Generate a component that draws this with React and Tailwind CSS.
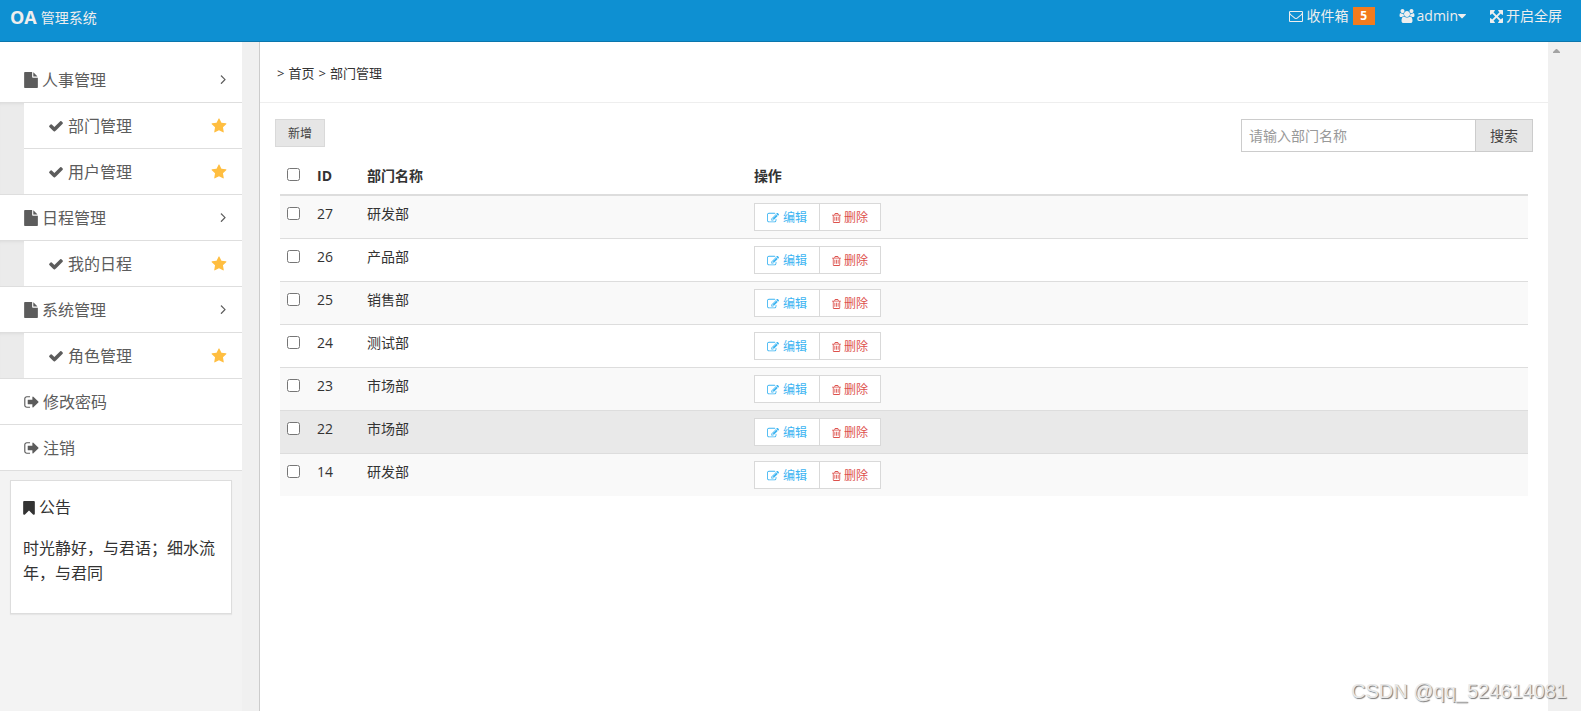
import React, { useState } from 'react';

const PATHS = {
  file: 'M1152 512v-472q22 14 36 28l408 408q14 14 28 36h-472zm-128 32q0 40 28 68t68 28h544v1056q0 40-28 68t-68 28h-1344q-40 0-68-28t-28-68v-1600q0-40 28-68t68-28h800v544z',
  check: 'M1671 566q0 40-28 68l-724 724-136 136q-28 28-68 28t-68-28l-136-136-362-362q-28-28-28-68t28-68l136-136q28-28 68-28t68 28l294 295 656-657q28-28 68-28t68 28l136 136q28 28 28 68z',
  star: 'M1728 647q0 22-26 48l-363 354 86 500q1 7 1 20 0 21-10.5 35.5t-30.5 14.5q-19 0-40-12l-449-236-449 236q-22 12-40 12-21 0-31.5-14.5t-10.5-35.5q0-6 2-20l86-500-364-354q-25-27-25-48 0-37 56-46l502-73 225-455q19-41 49-41t49 41l225 455 502 73q56 9 56 46z',
  angleRight: 'M1171 960q0 13-10 23l-466 466q-10 10-23 10t-23-10l-50-50q-10-10-10-23t10-23l393-393-393-393q-10-10-10-23t10-23l50-50q10-10 23-10t23 10l466 466q10 10 10 23z',
  signOut: 'M704 1440q0 4 1 20t.5 26.5-3 23.5-10 19.5-20.5 6.5h-320q-119 0-203.5-84.5t-84.5-203.5v-704q0-119 84.5-203.5t203.5-84.5h320q13 0 22.5 9.5t9.5 22.5q0 4 1 20t.5 26.5-3 23.5-10 19.5-20.5 6.5h-320q-66 0-113 47t-47 113v704q0 66 47 113t113 47h312l11.5 1 11.5 3 8 5.5 7 9 2 13.5zm928-544q0 26-19 45l-544 544q-19 19-45 19t-45-19-19-45v-288h-448q-26 0-45-19t-19-45v-384q0-26 19-45t45-19h448v-288q0-26 19-45t45-19 45 19l544 544q19 19 19 45z',
  bookmark: 'M1420 128q23 0 44 9 33 13 52.5 41t19.5 62v1289q0 34-19.5 62t-52.5 41q-19 8-44 8-48 0-83-32l-441-424-441 424q-36 33-83 33-23 0-44-9-33-13-52.5-41t-19.5-62v-1289q0-34 19.5-62t52.5-41q21-9 44-9h1048z',
  envelope: 'M1664 1504v-768q-32 36-69 66-268 206-426 338-51 43-83 67t-86.5 48.5-102.5 24.5h-2q-48 0-102.5-24.5t-86.5-48.5-83-67q-158-132-426-338-37-30-69-66v768q0 13 9.5 22.5t22.5 9.5h1472q13 0 22.5-9.5t9.5-22.5zm0-1051v-24.5l-.5-13-3-12.5-5.5-9-9-7.5-14-2.5h-1472q-13 0-22.5 9.5t-9.5 22.5q0 168 147 284 193 152 401 317 6 5 35 29.5t46 37.5 44.5 31.5 50.5 27.5 43 9h2q20 0 43-9t50.5-27.5 44.5-31.5 46-37.5 35-29.5q208-165 401-317 54-43 100.5-115.5t46.5-131.5zm128-37v1088q0 66-47 113t-113 47h-1472q-66 0-113-47t-47-113v-1088q0-66 47-113t113-47h1472q66 0 113 47t47 113z',
  users: 'M529 896q-162 5-265 128h-134q-82 0-138-40.5t-56-118.5q0-353 124-353 6 0 43.5 21t97.5 42.5 119 21.5q67 0 133-23-5 37-5 66 0 139 81 256zm1071 637q0 120-73 189.5t-194 69.5h-874q-121 0-194-69.5t-73-189.5q0-53 3.5-103.5t14-109 26.5-108.5 43-97.5 62-81 85.5-53.5 111.5-20q10 0 43 21.5t73 48 107 48 135 21.5 135-21.5 107-48 73-48 43-21.5q61 0 111.5 20t85.5 53.5 62 81 43 97.5 26.5 108.5 14 109 3.5 103.5zm-1024-1277q0 106-75 181t-181 75-181-75-75-181 75-181 181-75 181 75 75 181zm704 384q0 159-112.5 271.5t-271.5 112.5-271.5-112.5-112.5-271.5 112.5-271.5 271.5-112.5 271.5 112.5 112.5 271.5zm576 225q0 78-56 118.5t-138 40.5h-134q-103-123-265-128 81-117 81-256 0-29-5-66 66 23 133 23 59 0 119-21.5t97.5-42.5 43.5-21q124 0 124 353zm-128-609q0 106-75 181t-181 75-181-75-75-181 75-181 181-75 181 75 75 181z',
  arrows: 'M1411 541l-355 355 355 355 144-144q29-31 70-14 39 17 39 59v448q0 26-19 45t-45 19h-448q-42 0-59-40-17-39 14-69l144-144-355-355-355 355 144 144q31 30 14 69-17 40-59 40h-448q-26 0-45-19t-19-45v-448q0-42 40-59 39-17 69 14l144 144 355-355-355-355-144 144q-19 19-45 19-12 0-24-5-40-17-40-59v-448q0-26 19-45t45-19h448q42 0 59 40 17 39-14 69l-144 144 355 355 355-355-144-144q-31-30-14-69 17-40 59-40h448q26 0 45 19t19 45v448q0 42-39 59-13 5-25 5-26 0-45-19z',
  caretDown: 'M1408 704q0 26-19 45l-448 448q-19 19-45 19t-45-19l-448-448q-19-19-19-45t19-45 45-19h896q26 0 45 19t19 45z',
  edit: 'M888 1184l116-116-152-152-116 116v56h96v96h56zm440-720q-16-16-33 1l-350 350q-17 17-1 33t33-1l350-350q17-17 1-33zm80 594v190q0 119-84.5 203.5t-203.5 84.5h-832q-119 0-203.5-84.5t-84.5-203.5v-832q0-119 84.5-203.5t203.5-84.5h832q63 0 117 25 15 7 18 23 3 17-9 29l-49 49q-14 14-32 8-23-6-45-6h-832q-66 0-113 47t-47 113v832q0 66 47 113t113 47h832q66 0 113-47t47-113v-126q0-13 9-22l64-64q15-15 35-7t20 29zm-96-738l288 288-672 672h-288v-288zm444 132l-92 92-288-288 92-92q28-28 68-28t68 28l152 152q28 28 28 68t-28 68z',
  trash: 'M704 736v576q0 14-9 23t-23 9h-64q-14 0-23-9t-9-23v-576q0-14 9-23t23-9h64q14 0 23 9t9 23zm256 0v576q0 14-9 23t-23 9h-64q-14 0-23-9t-9-23v-576q0-14 9-23t23-9h64q14 0 23 9t9 23zm256 0v576q0 14-9 23t-23 9h-64q-14 0-23-9t-9-23v-576q0-14 9-23t23-9h64q14 0 23 9t9 23zm128 724v-948h-896v948q0 22 7 40.5t14.5 27 10.5 8.5h832q3 0 10.5-8.5t14.5-27 7-40.5zm-672-1076h448l-48-117q-7-9-17-11h-317q-10 2-17 11zm928 32v64q0 14-9 23t-23 9h-96v948q0 83-47 143.5t-113 60.5h-832q-66 0-113-58.5t-47-141.5v-952h-96q-14 0-23-9t-9-23v-64q0-14 9-23t23-9h309l70-167q15-37 54-63t79-26h320q40 0 79 26t54 63l70 167h309q14 0 23 9t9 23z',
};

const Icon = ({ name, box = '0 0 1792 1792', className }) => (
  <svg viewBox={box} fill="currentColor" aria-hidden="true" className={`shrink-0 ${className}`}>
    <path d={PATHS[name]} />
  </svg>
);

const menus = [
  { title: '人事管理', children: ['部门管理', '用户管理'] },
  { title: '日程管理', children: ['我的日程'] },
  { title: '系统管理', children: ['角色管理'] },
];

const departments = [
  { id: 27, name: '研发部' },
  { id: 26, name: '产品部' },
  { id: 25, name: '销售部' },
  { id: 24, name: '测试部' },
  { id: 23, name: '市场部' },
  { id: 22, name: '市场部' },
  { id: 14, name: '研发部' },
];

function Header() {
  return (
    <header className="flex h-[42px] items-start justify-between border-b border-[#0b76ac] bg-[#0e90d2] pl-2.5 pr-[19px] text-[#eee]">
      <div className="flex h-[34px] items-center gap-1">
        <strong className="text-lg leading-none">OA</strong>
        <small className="pt-0.5 text-sm leading-none">管理系统</small>
      </div>
      <nav className="flex h-8 items-center gap-6 text-sm">
        <a href="#inbox" className="flex items-center gap-1">
          <Icon name="envelope" className="size-3.5" />
          收件箱
          <span className="w-[22px] bg-[#f37b1d] text-center text-xs font-bold leading-[18px] text-white">5</span>
        </a>
        <a href="#user" className="flex items-center">
          <Icon name="users" box="-64 0 1920 1792" className="mr-0.5 h-3.5 w-4" />
          admin
          <Icon name="caretDown" box="384 0 1024 1792" className="h-3.5 w-2" />
        </a>
        <button type="button" className="flex items-center gap-[3px]">
          <Icon name="arrows" box="128 128 1536 1536" className="size-[13px]" />
          开启全屏
        </button>
      </nav>
    </header>
  );
}

function Sidebar() {
  return (
    <aside className="w-[242px] shrink-0 bg-[#f3f3f3]">
      <ul className="bg-white pt-[15px] text-base text-[#5c5c5c]">
        {menus.map((menu) => (
          <li key={menu.title}>
            <a href="#menu" className="flex h-[46px] items-center border-b border-[#dedede] pl-6 pr-4">
              <Icon name="file" box="128 0 1536 1792" className="mr-1 h-4 w-3.5" />
              {menu.title}
              <Icon name="angleRight" box="539 433 632 1026" className="ml-auto h-[9px] w-1.5" />
            </a>
            <ul className="border-b border-[#dedede] bg-[#ebebeb] pl-6 shadow-[inset_0_3px_3px_-2px_#ddd]">
              {menu.children.map((child) => (
                <li key={child} className="border-b border-[#dedede] bg-white last:border-b-0">
                  <a href="#child" className="flex h-[45px] items-center pl-6 pr-[15px]">
                    <Icon name="check" className="mr-1 size-4" />
                    {child}
                    <Icon name="star" className="ml-auto size-4 text-[#ffbe40]" />
                  </a>
                </li>
              ))}
            </ul>
          </li>
        ))}
        {['修改密码', '注销'].map((item) => (
          <li key={item} className="border-b border-[#dedede]">
            <a href="#account" className="flex h-[45px] items-center gap-1 pl-6">
              <Icon name="signOut" box="64 128 1600 1536" className="h-3.5 w-[15px]" />
              {item}
            </a>
          </li>
        ))}
      </ul>
      <section className="mx-2.5 mt-[9px] border border-[#ddd] bg-white px-3 pb-[27px] pt-3.5 text-base leading-[25px] text-[#333] shadow-[0_1px_1px_rgba(0,0,0,0.05)]">
        <p className="mb-4 flex items-center gap-1">
          <Icon name="bookmark" box="256 128 1280 1536" className="h-3.5 w-3" />
          公告
        </p>
        <p>时光静好，与君语；细水流年，与君同</p>
      </section>
    </aside>
  );
}

function DepartmentTable() {
  const [checked, setChecked] = useState([]);
  const allChecked = checked.length === departments.length;

  const toggle = (id) => {
    setChecked(checked.includes(id) ? checked.filter((item) => item !== id) : [...checked, id]);
  };

  return (
    <table className="w-full table-fixed border-separate border-spacing-0 text-left text-sm leading-[22px]">
      <colgroup>
        <col className="w-[30px]" />
        <col className="w-[50px]" />
        <col className="w-[31%]" />
        <col />
      </colgroup>
      <thead>
        <tr className="*:border-b-2 *:border-[#ddd] *:p-[7px] *:align-top">
          <th>
            <input
              type="checkbox"
              aria-label="全选"
              className="mt-[3px] block size-[13px]"
              checked={allChecked}
              onChange={() => setChecked(allChecked ? [] : departments.map((d) => d.id))}
            />
          </th>
          <th>ID</th>
          <th>部门名称</th>
          <th>操作</th>
        </tr>
      </thead>
      <tbody>
        {departments.map((department) => (
          <tr
            key={department.id}
            className={`*:border-t *:border-[#ddd] *:p-[7px] *:align-top first:*:border-t-0 ${
              department.id === 22 ? 'bg-[#e9e9e9]' : 'odd:bg-[#f9f9f9]'
            }`}
          >
            <td>
              <input
                type="checkbox"
                aria-label={`选择 ${department.id}`}
                className="mt-1 block size-[13px]"
                checked={checked.includes(department.id)}
                onChange={() => toggle(department.id)}
              />
            </td>
            <td>{department.id}</td>
            <td>{department.name}</td>
            <td>
              <div className="flex text-xs">
                <button type="button" className="flex h-7 items-center gap-1 border border-r-0 border-[#d9d9d9] bg-white px-3 pt-0.5 text-[#3bb4f2]">
                  <Icon name="edit" className="size-3" />
                  编辑
                </button>
                <button type="button" className="flex h-7 items-center gap-[3px] border border-[#d9d9d9] bg-white px-3 pt-0.5 text-[#dd514c]">
                  <Icon name="trash" box="192 0 1408 1792" className="h-3 w-[9px]" />
                  删除
                </button>
              </div>
            </td>
          </tr>
        ))}
      </tbody>
    </table>
  );
}

function App() {
  const [keyword, setKeyword] = useState('');

  return (
    <div className="relative flex min-h-screen flex-col bg-[#f0f0f0] font-['Open_Sans','Noto_Sans_CJK_SC',sans-serif] text-[#333]">
      <Header />
      <div className="flex flex-1">
        <Sidebar />
        <main className="ml-[17px] flex-1 border-l border-[#ccc] bg-white">
          <div className="flex h-[61px] items-center gap-1 border-b border-[#eee] px-[17px] pt-1 text-[13px]">
            <span>&gt;</span>
            <a href="#home">首页</a>
            <span>&gt;</span>
            <a href="#department">部门管理</a>
          </div>
          <div className="flex items-start justify-between px-[15px] pt-4">
            <button type="button" className="h-7 border border-[#d9d9d9] bg-[#e6e6e6] px-3 pt-0.5 text-xs text-[#444]">
              新增
            </button>
            <form className="flex h-[33px] text-sm" onSubmit={(e) => e.preventDefault()}>
              <input
                type="text"
                aria-label="部门名称"
                placeholder="请输入部门名称"
                value={keyword}
                onChange={(e) => setKeyword(e.target.value)}
                className="w-[234px] border border-r-0 border-[#ccc] bg-white px-[7px] placeholder:text-[#999]"
              />
              <button type="submit" className="border border-[#ccc] bg-[#e6e6e6] px-3.5 text-[#444]">
                搜索
              </button>
            </form>
          </div>
          <div className="mt-1.5 px-5">
            <DepartmentTable />
          </div>
        </main>
        <div className="w-[33px] shrink-0 pl-[5px] pt-[7px]">
          <svg viewBox="0 0 7 4" className="h-1 w-[7px] text-[#a3a3a3]" fill="currentColor" aria-hidden="true">
            <path d="M3 0h1l3 3v1H0V3z" />
          </svg>
        </div>
      </div>
      <p className="absolute bottom-1.5 right-3.5 font-['Liberation_Sans',sans-serif] text-xl text-[#e8e8e8] [text-shadow:1px_1px_1px_#777]">
        CSDN @qq_524614081
      </p>
    </div>
  );
}

export default App;
